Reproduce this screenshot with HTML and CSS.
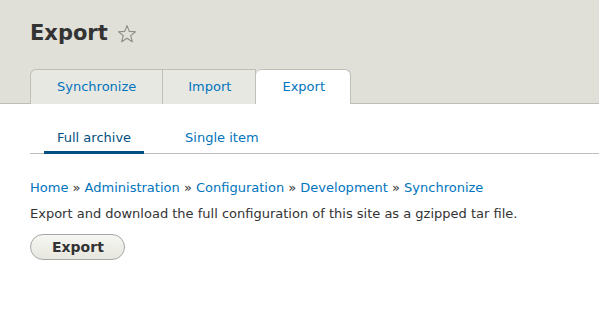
FILE: index.html
```html
<!DOCTYPE html>
<html lang="en">
<head>
    <meta charset="UTF-8">
    <title>Export</title>
    <link rel="stylesheet" href="styles.css">
</head>
<body>
<div class="page-header">
    <h1 class="page-title">Export
        <svg class="shortcut-star" width="20" height="20" viewBox="0 0 20 20">
            <path d="M10 1.6 L12.3 7.4 L18.5 7.7 L13.7 11.6 L15.3 17.7 L10 14.3 L4.7 17.7 L6.3 11.6 L1.5 7.7 L7.7 7.4 Z" fill="none" stroke="#8c8c88" stroke-width="1.1" stroke-linejoin="round"/>
        </svg>
    </h1>
    <ul class="tabs primary">
        <li><a href="#">Synchronize</a></li>
        <li><a href="#">Import</a></li>
        <li class="is-active"><a href="#">Export</a></li>
    </ul>
</div>
<div class="content">
    <ul class="tabs secondary">
        <li class="is-active"><a href="#">Full archive</a></li>
        <li><a href="#">Single item</a></li>
    </ul>
    <nav class="breadcrumb">
        <a href="#">Home</a> » <a href="#">Administration</a> » <a href="#">Configuration</a> » <a href="#">Development</a> » <a href="#">Synchronize</a>
    </nav>
    <p class="description">Export and download the full configuration of this site as a gzipped tar file.</p>
    <button class="button">Export</button>
</div>
</body>
</html>
```

FILE: styles.css
```css
* {
    box-sizing: border-box;
}

body {
    margin: 0;
    font-family: "DejaVu Sans", Verdana, sans-serif;
    font-size: 13px;
    color: #333;
    background: #fff;
}

a {
    color: #0074bd;
    text-decoration: none;
}

.page-header {
    background: #e0e0d8;
    border-bottom: 1px solid #bfbfba;
    padding: 0 30px;
}

.page-title {
    display: flex;
    align-items: flex-start;
    gap: 9px;
    margin: 0;
    padding-top: 21px;
    height: 69px;
    font-size: 21px;
    font-weight: bold;
    color: #333;
}

.shortcut-star {
    margin-top: 3px;
}

.tabs {
    list-style: none;
    margin: 0;
    padding: 0;
    display: flex;
}

.tabs.primary li {
    background: #e8e8e3;
    border: 1px solid #bfbfba;
    border-bottom: none;
    border-left: none;
    margin-bottom: -1px;
}

.tabs.primary li:first-child {
    border-left: 1px solid #bfbfba;
    border-top-left-radius: 6px;
}

.tabs.primary a {
    display: block;
    height: 34px;
    line-height: 34px;
    padding: 0 24px 0 25px;
    color: #0074bd;
}

.tabs.primary li:first-child a {
    padding: 0 26px;
}

.tabs.primary li.is-active {
    background: #fff;
    border-top-left-radius: 6px;
    border-top-right-radius: 6px;
}

.tabs.primary li.is-active a {
    padding: 0 25px 0 26px;
}

.content {
    padding: 0 0 0 30px;
}

.tabs.secondary {
    border-bottom: 1px solid #bfbfba;
    padding: 20px 0 0 14px;
    gap: 28px;
}

.tabs.secondary a {
    display: block;
    padding: 6px 13px 6px;
    color: #0074bd;
    border-bottom: 3px solid transparent;
    margin-bottom: -1px;
}

.tabs.secondary li.is-active a {
    color: #004f80;
    border-bottom-color: #004f80;
}

.breadcrumb {
    margin-top: 26px;
    color: #333;
}

.description {
    margin: 11px 0 13px;
}

.button {
    font-family: inherit;
    font-size: 14px;
    font-weight: bold;
    color: #333;
    padding: 3px 20px 3px 21px;
    height: 26px;
    border: 1px solid #a6a6a6;
    border-radius: 20px;
    background: linear-gradient(to bottom, #f6f6f3, #e7e7df);
}
```
